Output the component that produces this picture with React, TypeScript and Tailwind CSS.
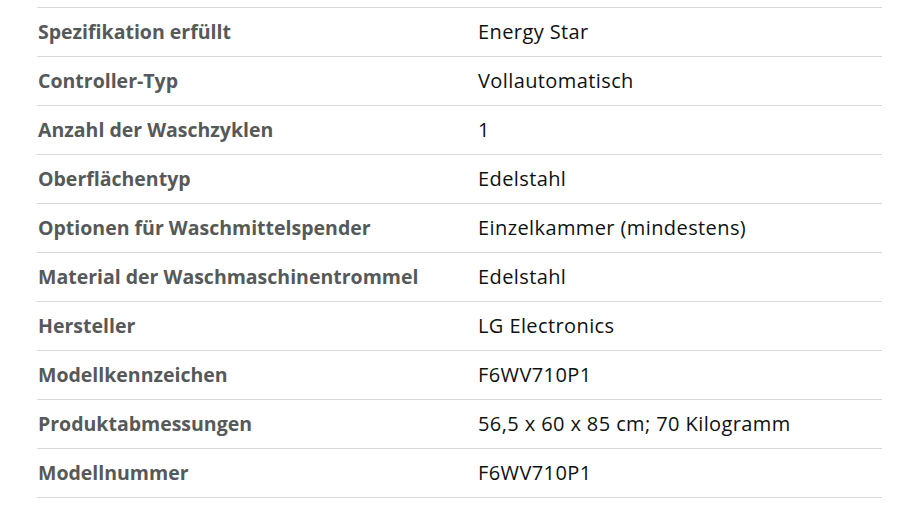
const rows: [string, string][] = [
  ["Spezifikation erfüllt", "Energy Star"],
  ["Controller-Typ", "Vollautomatisch"],
  ["Anzahl der Waschzyklen", "1"],
  ["Oberflächentyp", "Edelstahl"],
  ["Optionen für Waschmittelspender", "Einzelkammer (mindestens)"],
  ["Material der Waschmaschinentrommel", "Edelstahl"],
  ["Hersteller", "LG Electronics"],
  ["Modellkennzeichen", "F6WV710P1"],
  ["Produktabmessungen", "56,5 x 60 x 85 cm; 70 Kilogramm"],
  ["Modellnummer", "F6WV710P1"],
];

export default function App() {
  return (
    <div className="w-[909px] h-[505px] bg-white pt-[7px] pl-[37px]" style={{ fontFamily: '"Open Sans", "Liberation Sans", sans-serif' }}>
      <div className="w-[845px] border-t border-[#d5d9d9]">
        {rows.map(([k, v]) => (
          <div key={k} className="flex h-[49px] items-center border-b border-[#d5d9d9]">
            <div className="w-[441px] pl-[1px] text-[19.5px] font-bold text-[#565959]">{k}</div>
            <div className="text-[20px] tracking-[0.4px] text-[#0f1111]">{v}</div>
          </div>
        ))}
      </div>
    </div>
  );
}
